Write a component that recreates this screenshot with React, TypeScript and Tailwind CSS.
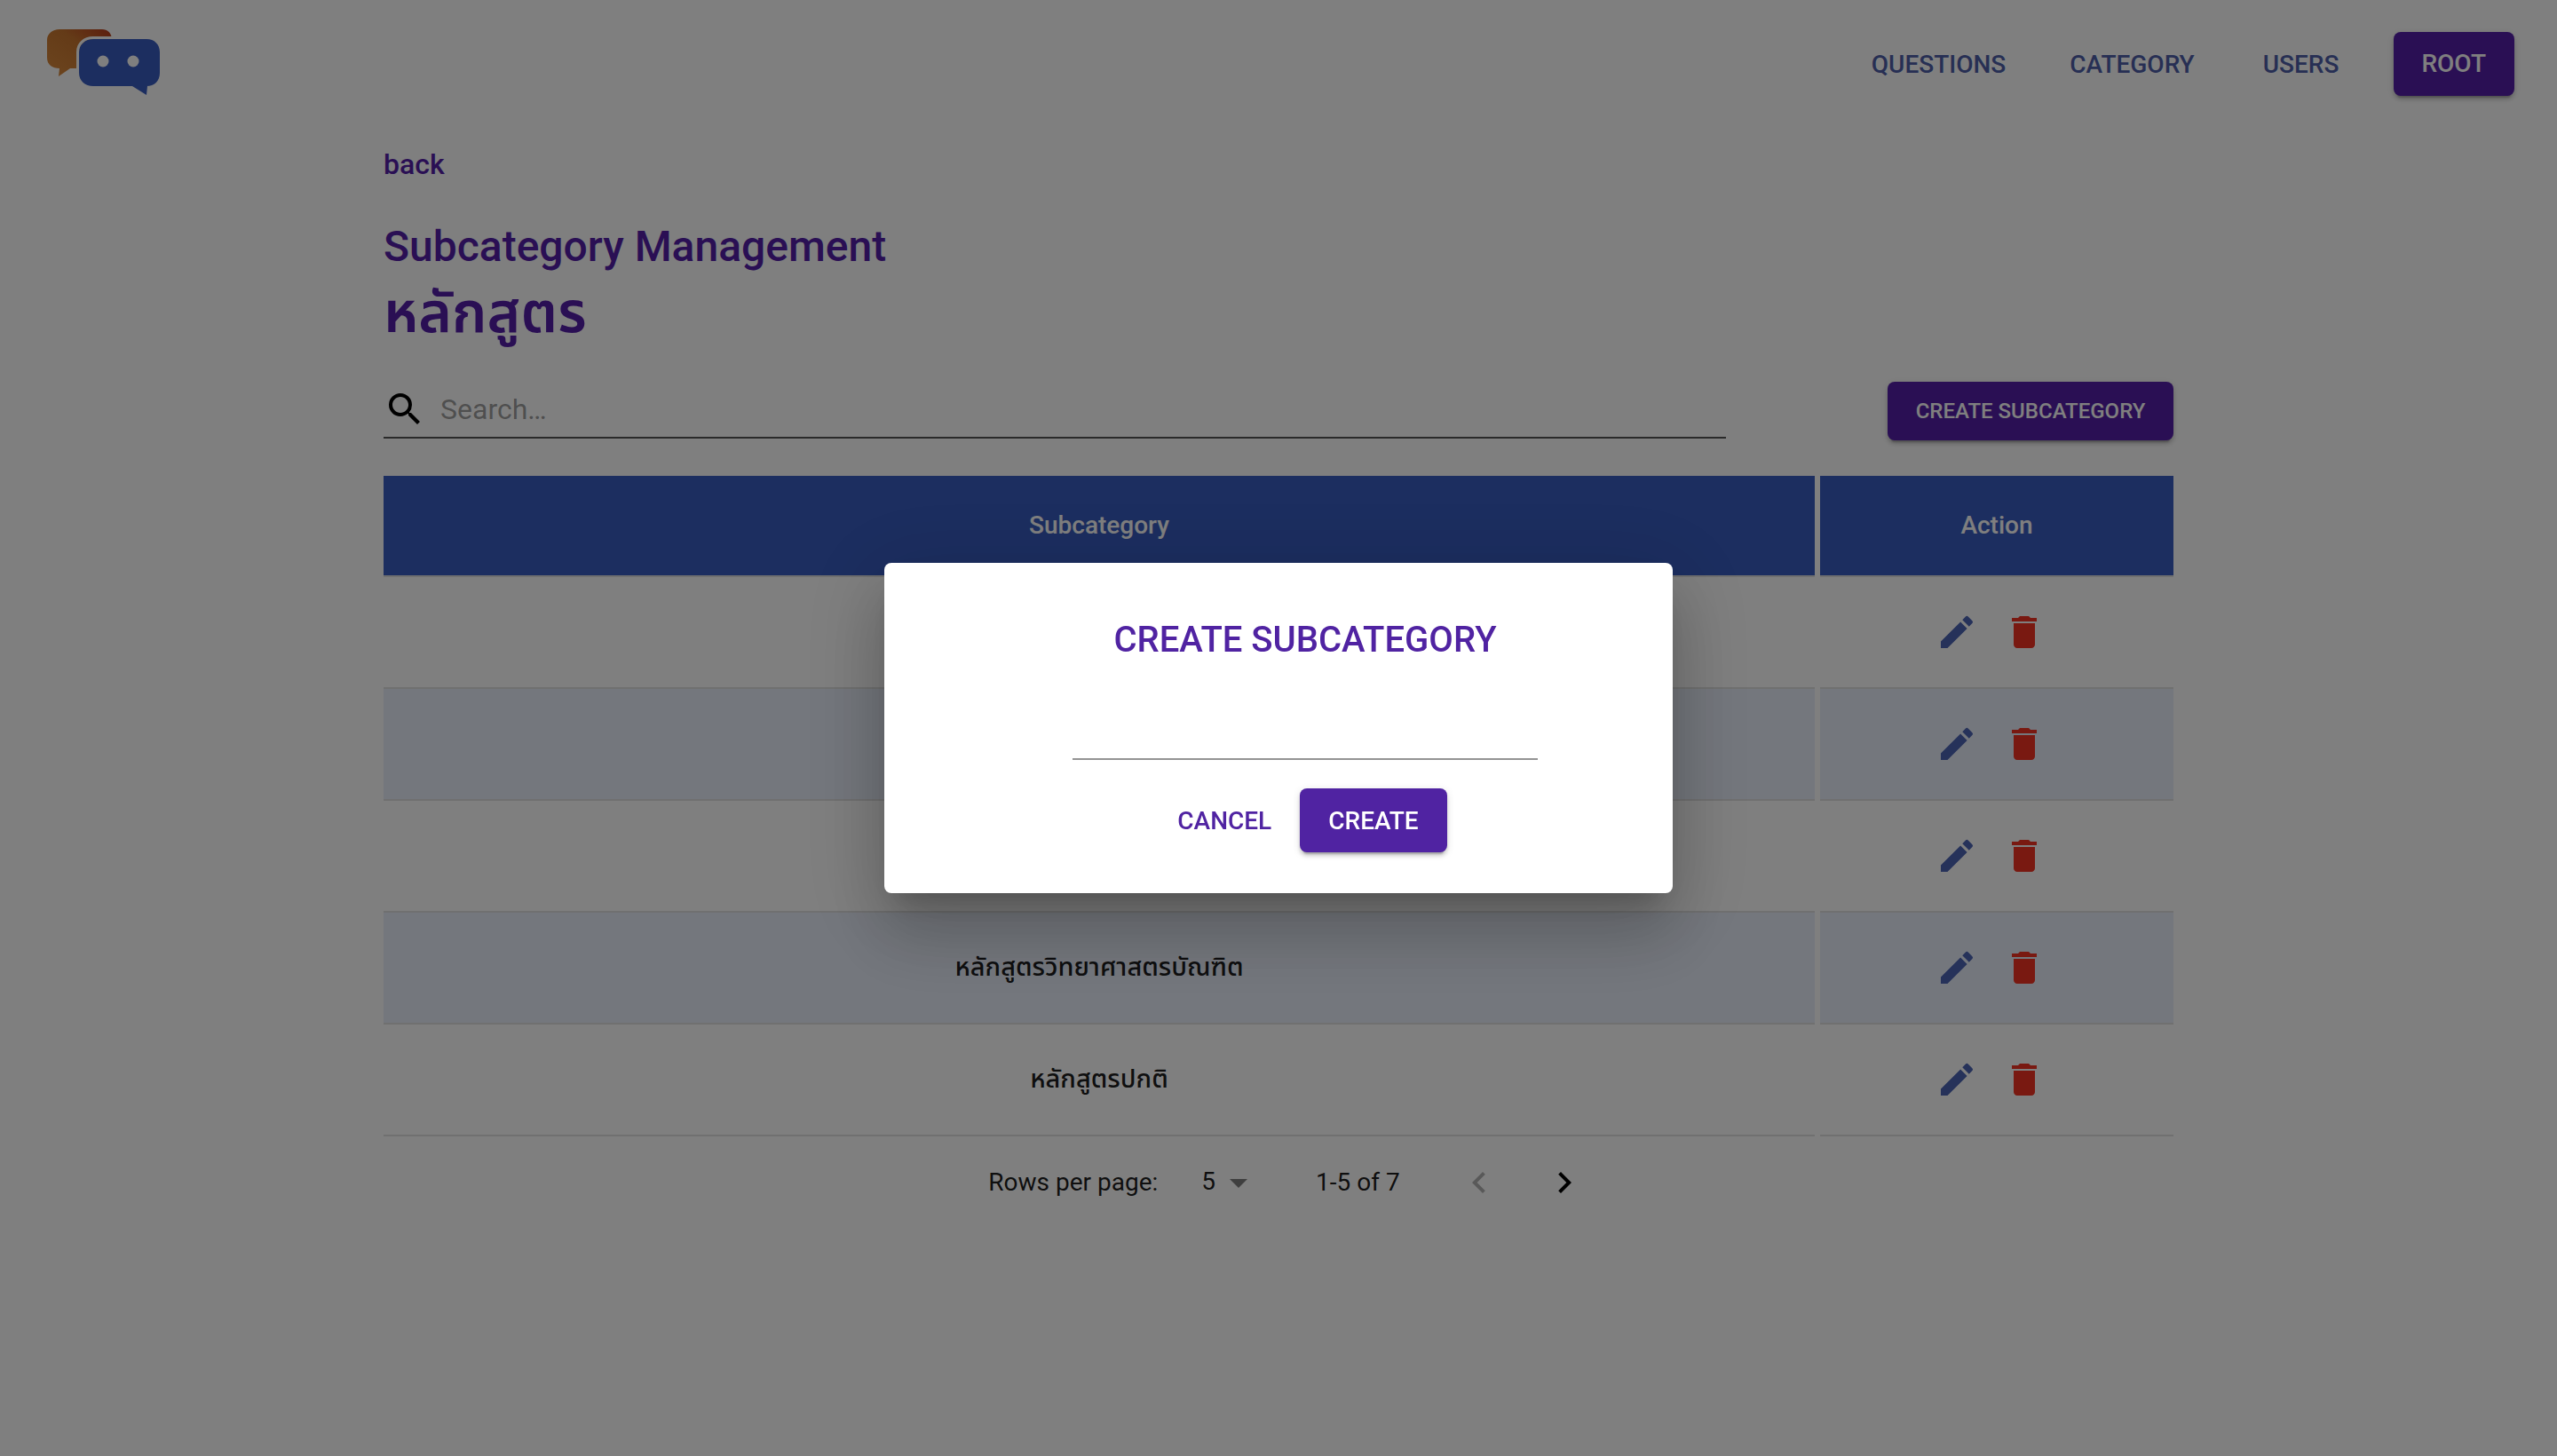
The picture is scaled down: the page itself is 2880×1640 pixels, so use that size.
import React from "react";
import { MdEdit, MdDelete, MdSearch, MdChevronLeft, MdChevronRight, MdArrowDropDown } from "react-icons/md";

const btnShadow = "shadow-[0_6px_2px_-4px_rgba(0,0,0,0.2),0_4px_4px_0_rgba(0,0,0,0.14),0_2px_10px_0_rgba(0,0,0,0.12)]";

function Logo() {
  return (
    <svg width="130" height="76" viewBox="0 0 130 76" className="block">
      <defs>
        <linearGradient id="orange" x1="0" y1="1" x2="1" y2="0">
          <stop offset="0" stopColor="#d98b3e" />
          <stop offset="0.6" stopColor="#c9762f" />
          <stop offset="1" stopColor="#b83a1c" />
        </linearGradient>
      </defs>
      <path d="M14 0H62C68 0 73 4 73 12V34C73 40 68 44 62 44H26L13 53L14 44C6 44 0 40 0 32V12C0 5 6 0 14 0Z" fill="url(#orange)" />
      <path d="M52 11H112C121 11 127 17 127 26V49C127 58 121 64 112 64H122H113L112 74L96 64H52C43 64 36 58 36 49V26C36 17 43 11 52 11Z" fill="#385cc0" />
      <path d="M52 8H112V11H52C43 11 36 17 36 26V49H33V26C33 15 41 8 52 8Z" fill="#ffffff" />
      <circle cx="63" cy="36" r="6.5" fill="#ffffff" />
      <circle cx="97" cy="36" r="6.5" fill="#ffffff" />
    </svg>
  );
}

const rows = ["", "", "", "หลักสูตรวิทยาศาสตรบัณฑิต", "หลักสูตรปกติ"];

function Row({ label, shaded }: { label: string; shaded: boolean }) {
  const bg = shaded ? "bg-[#e9effb]" : "bg-white";
  return (
    <div className="grid grid-cols-[1612px_398px] gap-x-[6px] h-[126px]">
      <div className={`${bg} border-b-2 border-[#e0e0e0] flex items-center justify-center text-[29px] font-medium text-black/90`}>{label}</div>
      <div className={`${bg} border-b-2 border-[#e0e0e0] flex items-center justify-center gap-[28px] pr-[14px]`}>
        <MdEdit className="w-12 h-12 text-[#4c64b4]" />
        <MdDelete className="w-12 h-12 text-[#f23322]" />
      </div>
    </div>
  );
}

export default function App() {
  return (
    <div className="min-h-screen bg-white font-['Roboto','Noto_Sans_Thai',sans-serif] relative overflow-hidden">
      <header className="flex items-center justify-between pl-[53px] pr-[48px] pt-[36px] h-[108px]">
        <div className="-mt-[2px]"><Logo /></div>
        <nav className="flex items-center text-[28px] font-medium text-[#4f5fa8]">
          <span className="mt-[1px]">QUESTIONS</span>
          <span className="ml-[72px] mt-[1px]">CATEGORY</span>
          <span className="ml-[77px] mt-[1px]">USERS</span>
          <span className={`ml-[62px] bg-[#541ea8] text-white pl-[31px] pr-[32px] h-[72px] flex items-center rounded-lg ${btnShadow}`}>ROOT</span>
        </nav>
      </header>

      <main className="w-[70%] mx-auto">
        <div className="mt-[55px] text-[32px] leading-[44px] font-medium text-[#541ea8]">back</div>
        <h1 className="mt-[36px] text-[48px] leading-[70px] font-medium text-[#541ea8]">Subcategory Management</h1>
        <h2 className="text-[64px] leading-[80px] font-semibold text-[#541ea8] tracking-[0.2px]">หลักสูตร</h2>

        <div className="mt-[37px] flex items-start justify-between">
          <div className="w-[1512px] h-[64px] border-b-2 border-[#555555] flex items-center">
            <MdSearch className="w-12 h-12 text-black" />
            <span className="ml-[16px] text-[32px] text-black/40">Search…</span>
          </div>
          <button className={`h-[66px] w-[322px] rounded-lg bg-[#541ea8] text-white text-[24px] font-medium ${btnShadow}`}>CREATE SUBCATEGORY</button>
        </div>

        <div className="mt-[40px] grid grid-cols-[1612px_398px] gap-x-[6px] h-[114px] text-[28px] font-medium text-white">
          <div className="bg-[#385cc0] border-b-2 border-[#e0e0e0] flex items-center justify-center">Subcategory</div>
          <div className="bg-[#385cc0] border-b-2 border-[#e0e0e0] flex items-center justify-center">Action</div>
        </div>
        {rows.map((label, i) => (
          <Row key={i} label={label} shaded={i % 2 === 1} />
        ))}

        <div className="mt-[28px] flex items-center justify-center pl-[19px] text-[28px] text-black/90 h-[48px]">
          <span>Rows per page:</span>
          <span className="ml-[49px] -mt-[3px]">5</span>
          <MdArrowDropDown className="w-12 h-12 text-black/50 ml-[2px] -mr-[2px]" />
          <span className="ml-[65px]">1-5 of 7</span>
          <MdChevronLeft className="w-12 h-12 text-black/30 ml-[65px]" />
          <MdChevronRight className="w-12 h-12 text-black ml-[48px]" />
        </div>
      </main>

      <div className="fixed inset-0 bg-black/50" />
      <div className="fixed inset-0 flex items-center justify-center">
        <div className="w-[888px] h-[372px] bg-white rounded-lg pl-[60px] flex flex-col items-center shadow-[0_22px_30px_-14px_rgba(0,0,0,0.2),0_48px_76px_6px_rgba(0,0,0,0.14),0_18px_92px_16px_rgba(0,0,0,0.12)]">
          <div className="mt-[63px] text-[40px] leading-[48px] font-medium text-[#5023a2] whitespace-nowrap">CREATE SUBCATEGORY</div>
          <div className="mt-[109px] w-[524px] h-[2px] bg-[#949494] shrink-0" />
          <div className="mt-[32px] flex items-center text-[28px] font-medium">
            <span className="px-[16px] pt-[1px] text-[#5023a2]">CANCEL</span>
            <span className={`ml-[16px] h-[72px] px-[32px] pt-[1px] flex items-center rounded-lg bg-[#5023a2] text-white ${btnShadow}`}>CREATE</span>
          </div>
        </div>
      </div>
    </div>
  );
}
